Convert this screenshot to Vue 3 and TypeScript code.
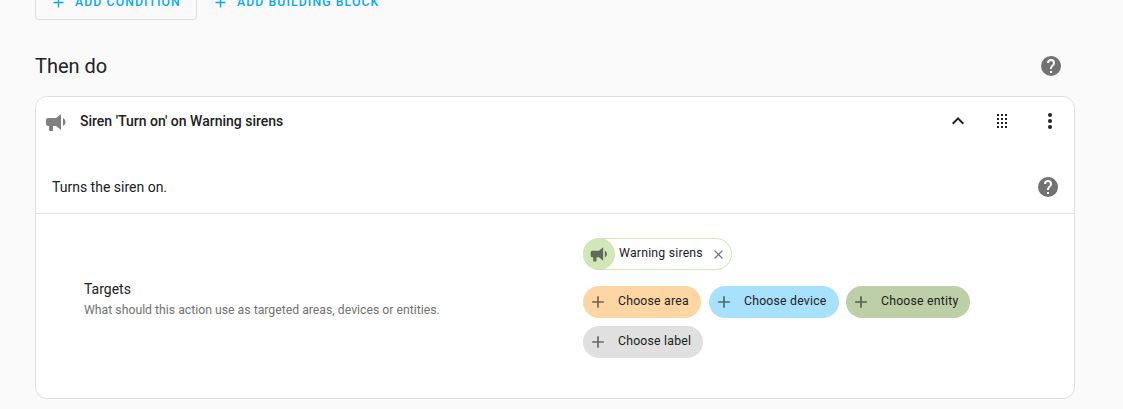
<script setup lang="ts">
interface Chip {
  label: string
  kind: string
}

const icons = {
  plus: 'M19,13H13V19H11V13H5V11H11V5H13V11H19V13Z',
  help: 'M15.07,11.25L14.17,12.17C13.45,12.89 13,13.5 13,15H11V14.5C11,13.39 11.45,12.39 12.17,11.67L13.41,10.41C13.78,10.05 14,9.55 14,9C14,7.89 13.1,7 12,7A2,2 0 0,0 10,9H8A4,4 0 0,1 12,5A4,4 0 0,1 16,9C16,9.88 15.64,10.67 15.07,11.25M13,19H11V17H13M12,2A10,10 0 0,0 2,12A10,10 0 0,0 12,22A10,10 0 0,0 22,12C22,6.47 17.5,2 12,2Z',
  bullhorn: 'M12,8H4A2,2 0 0,0 2,10V14A2,2 0 0,0 4,16H5V20A1,1 0 0,0 6,21H8A1,1 0 0,0 9,20V16H12L17,20V4L12,8M21.5,12C21.5,13.71 20.54,15.26 19,16V8C20.53,8.75 21.5,10.3 21.5,12Z',
  chevronUp: 'M7.41,15.41L12,10.83L16.59,15.41L18,14L12,8L6,14L7.41,15.41Z',
  drag: 'M7,19V17H9V19H7M11,19V17H13V19H11M15,19V17H17V19H15M7,15V13H9V15H7M11,15V13H13V15H11M15,15V13H17V15H15M7,11V9H9V11H7M11,11V9H13V11H11M15,11V9H17V11H15M7,7V5H9V7H7M11,7V5H13V7H11M15,7V5H17V7H15Z',
  dots: 'M12,16A2,2 0 0,1 14,18A2,2 0 0,1 12,20A2,2 0 0,1 10,18A2,2 0 0,1 12,16M12,10A2,2 0 0,1 14,12A2,2 0 0,1 12,14A2,2 0 0,1 10,12A2,2 0 0,1 12,10M12,4A2,2 0 0,1 14,6A2,2 0 0,1 12,8A2,2 0 0,1 10,6A2,2 0 0,1 12,4Z',
  close: 'M19,6.41L17.59,5L12,10.59L6.41,5L5,6.41L10.59,12L5,17.59L6.41,19L12,13.41L17.59,19L19,17.59L13.41,12L19,6.41Z',
}

const chips: Chip[] = [
  { label: 'Choose area', kind: 'area' },
  { label: 'Choose device', kind: 'device' },
  { label: 'Choose entity', kind: 'entity' },
  { label: 'Choose label', kind: 'label' },
]
</script>

<template>
  <main class="page">
    <div class="buttons">
      <button class="btn outlined">
        <svg class="i17" viewBox="0 0 24 24"><path :d="icons.plus" /></svg><span>ADD CONDITION</span>
      </button>
      <button class="btn">
        <svg class="i17" viewBox="0 0 24 24"><path :d="icons.plus" /></svg><span>ADD BUILDING BLOCK</span>
      </button>
    </div>

    <header class="section">
      <h2>Then do</h2>
      <svg class="i24 grey" viewBox="0 0 24 24"><path :d="icons.help" /></svg>
    </header>

    <section class="card">
      <div class="card-head">
        <svg class="i24 horn" viewBox="0 0 24 24"><path :d="icons.bullhorn" /></svg>
        <h3>Siren 'Turn on' on Warning sirens</h3>
        <div class="actions">
          <svg class="i24" viewBox="0 0 24 24"><path :d="icons.chevronUp" /></svg>
          <svg class="i24 drag" viewBox="0 0 24 24" shape-rendering="crispEdges"><path :d="icons.drag" /></svg>
          <svg class="i24" viewBox="0 0 24 24"><path :d="icons.dots" /></svg>
        </div>
      </div>

      <div class="description">
        <p>Turns the siren on.</p>
        <svg class="i24 grey" viewBox="0 0 24 24"><path :d="icons.help" /></svg>
      </div>

      <div class="targets">
        <div class="info">
          <div class="name">Targets</div>
          <div class="hint">What should this action use as targeted areas, devices or entities.</div>
        </div>
        <div class="picker">
          <div class="chip selected">
            <span class="avatar"><svg class="i20" viewBox="0 0 24 24"><path :d="icons.bullhorn" /></svg></span>
            <span class="text">Warning sirens</span>
            <svg class="i15" viewBox="0 0 24 24"><path :d="icons.close" /></svg>
          </div>
          <div class="choices">
            <div v-for="chip in chips" :key="chip.kind" class="chip" :class="chip.kind">
              <svg class="i20" viewBox="0 0 24 24"><path :d="icons.plus" /></svg>
              <span class="text">{{ chip.label }}</span>
            </div>
          </div>
        </div>
      </div>
    </section>
  </main>
</template>

<style>
body {
  margin: 0;
  background: #fafafa;
}
</style>

<style scoped>
.page {
  box-sizing: border-box;
  height: 409px;
  padding: 0 48px 0 35px;
  overflow: hidden;
  background: #fafafa;
  color: #212121;
  font-family: Roboto, "Liberation Sans", sans-serif;
}
svg {
  display: block;
  flex: none;
  fill: currentColor;
}
.i15 { width: 15px; height: 15px; }
.i17 { width: 17px; height: 17px; }
.i20 { width: 20px; height: 20px; }
.i24 { width: 24px; height: 24px; }
.grey { color: #727272; }
h2, h3, p { margin: 0; font-weight: 400; }

.buttons {
  display: flex;
  gap: 8px;
  height: 36px;
  margin-top: -16px;
}
.btn {
  box-sizing: border-box;
  display: flex;
  align-items: center;
  gap: 8px;
  height: 36px;
  padding: 0 7px;
  border: 0;
  background: none;
  color: #03a9f4;
  font: 500 12.25px/36px Roboto, "Liberation Sans", sans-serif;
  letter-spacing: 1.094px;
  white-space: nowrap;
}
.outlined {
  width: 162px;
  padding: 0 14px;
  border: 1px solid #dcdcdc;
  border-radius: 4px;
}

.section {
  display: flex;
  align-items: center;
  justify-content: space-between;
  height: 24px;
  margin-top: 34px;
  padding-right: 12px;
}
h2 { font-size: 20px; line-height: 24px; }

.card {
  box-sizing: border-box;
  height: 303px;
  margin-top: 18px;
  border: 1px solid #e0e0e0;
  border-radius: 12px;
  background: #fff;
}
.card-head {
  display: flex;
  align-items: center;
  height: 48px;
  padding: 0 12px 0 8px;
}
.horn { margin-top: 2px; color: #808080; }
h3 {
  margin-left: 12px;
  font-size: 14px;
  font-weight: 500;
}
.actions {
  display: flex;
  gap: 20px;
  margin-left: auto;
}
.drag { margin-right: 4px; }

.description {
  box-sizing: border-box;
  display: flex;
  align-items: center;
  justify-content: space-between;
  height: 69px;
  padding: 16px 14px 1px 16px;
  border-bottom: 1px solid #e0e0e0;
}
.description p { font-size: 14px; }

.targets {
  display: flex;
  height: 184px;
}
.info {
  box-sizing: border-box;
  width: 547px;
  padding: 65px 0 0 48px;
}
.name { font-size: 14px; line-height: 20px; }
.hint { font-size: 12.25px; line-height: 22px; color: #727272; }
.picker { padding-top: 24px; }
.choices {
  display: flex;
  flex-wrap: wrap;
  gap: 8px;
  width: 400px;
  margin-top: 16px;
}
.chip {
  box-sizing: border-box;
  display: flex;
  align-items: center;
  height: 32px;
  padding: 0 12px 0 5px;
  border-radius: 16px;
  font-size: 12.25px;
  letter-spacing: 0.219px;
  white-space: nowrap;
}
.chip .text { line-height: 18px; margin-bottom: 2px; }
.chip svg { color: rgba(0, 0, 0, 0.54); }
.choices .text { margin-left: 10px; }
.area { background: #fed6a4; width: 118px; }
.device { background: #a8e1fb; width: 130px; }
.entity { background: #bdcfa6; width: 124px; margin-left: -1px; }
.label { background: #e0e0e0; width: 120px; }
.selected {
  width: 149px;
  padding: 0;
  background: #fff;
  box-shadow: inset 0 0 0 1px #d2e7b9;
}
.avatar {
  display: flex;
  align-items: center;
  justify-content: center;
  width: 32px;
  height: 32px;
  border-radius: 50%;
  background: #d2e7b9;
}
.selected .text { margin-left: 4px; width: 92px; }
</style>
